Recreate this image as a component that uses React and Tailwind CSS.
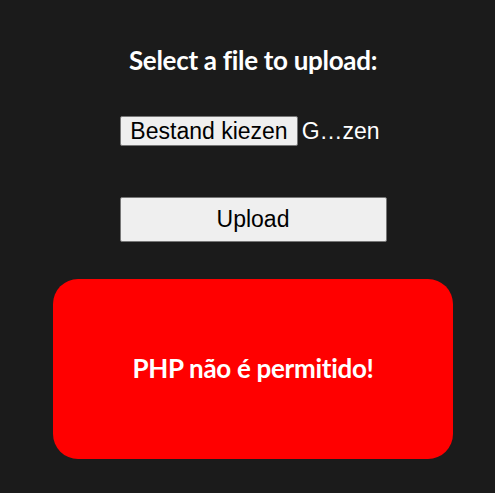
export default function App() {
  return (
    <div className="min-h-[493px] w-full bg-[#1b1b1b] pl-[11px] flex flex-col items-center">
      <h2
        className="mt-[44px] text-[26px] font-bold text-white leading-[32px] tracking-[-0.3px]"
        style={{ fontFamily: '"Lato", "Noto Sans", sans-serif' }}
      >
        Select a file to upload:
      </h2>

      <div
        className="mt-[38px] flex items-center text-[23px] text-white -ml-[6px]"
        style={{ fontFamily: '"Liberation Sans", Arial, sans-serif' }}
      >
        <span className="h-[30px] px-[9px] flex items-center bg-[#efefef] text-black border border-[#767676] rounded-[2px]">
          Bestand kiezen
        </span>
        <span className="ml-[4px]">G…zen</span>
      </div>

      <button
        className="mt-[48px] w-[267px] h-[45px] bg-[#efefef] text-black text-[23px] border border-[#767676] rounded-[2px]"
        style={{ fontFamily: '"Liberation Sans", Arial, sans-serif' }}
      >
        Upload
      </button>

      <div className="mt-[37px] w-[400px] h-[180px] bg-[#ff0000] rounded-[25px] flex items-center justify-center">
        <span
          className="text-white text-[26px] font-bold tracking-[-0.3px]"
          style={{ fontFamily: '"Lato", "Noto Sans", sans-serif' }}
        >
          PHP não é permitido!
        </span>
      </div>
    </div>
  );
}
